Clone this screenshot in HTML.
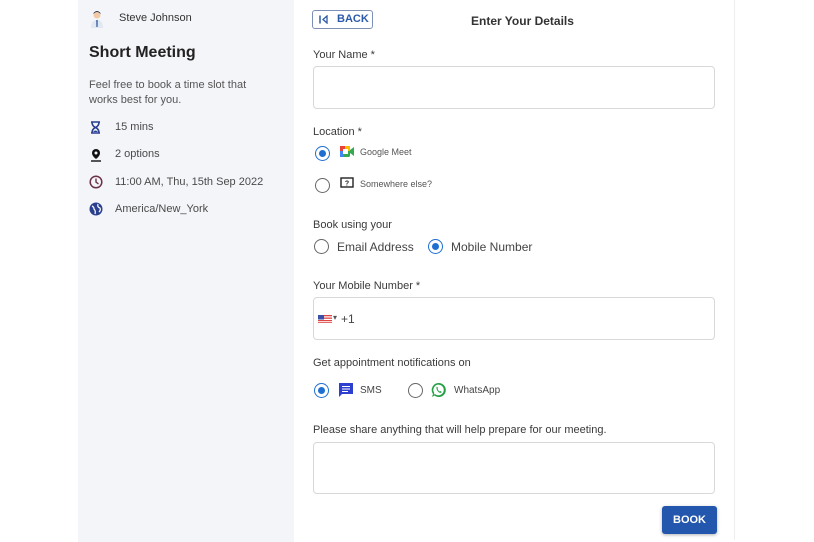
<!DOCTYPE html>
<html><head><style>
*{margin:0;padding:0;box-sizing:border-box}
body{width:814px;height:542px;background:#fff;font-family:"Liberation Sans",Arial,sans-serif;position:relative;overflow:hidden;color:#333}
.a{position:absolute;white-space:nowrap}
.side{position:absolute;left:78px;top:0;width:216px;height:542px;background:#f4f5f9}
.vl{position:absolute;left:734px;top:0;width:1px;height:540px;background:#eee}
.lbl{font-size:11px;color:#3a3a3a}
.box{position:absolute;border:1px solid #d8d8d8;border-radius:4px;background:#fff}
.r{position:absolute;width:15px;height:15px;border:1.6px solid #666;border-radius:50%}
.r.on{border-color:#1e6fd0}
.r.on::after{content:"";position:absolute;left:2.5px;top:2.5px;width:7px;height:7px;border-radius:50%;background:#1e6fd0}
.si{font-size:11px;color:#4a4a4a}
</style></head><body>
<div class="side"></div>
<div class="vl"></div>
<svg class="a" style="left:89px;top:10px" width="16" height="18"><circle cx="8" cy="5" r="3.5" fill="#f2c9a5"/><path d="M4.5 4 Q8 0 11.5 4 L11.5 3 Q8 -1 4.5 3Z" fill="#2a3a5a"/><path d="M2 18 Q2 10 8 10 Q14 10 14 18Z" fill="#dfe8f3"/><path d="M7.3 10 L8.7 10 L8.6 17 L7.4 17Z" fill="#2c5a9a"/></svg>
<div class="a" style="left:119px;top:12px;font-size:11px;color:#333">Steve Johnson</div>
<div class="a" style="left:89px;top:44px;font-size:16px;font-weight:bold;color:#222">Short Meeting</div>
<div class="a" style="left:89px;top:78px;font-size:11px;color:#555;line-height:15px">Feel free to book a time slot that<br>works best for you.</div>
<svg class="a" style="left:90px;top:121px" width="12" height="13"><path d="M1 1H10M1 12H10M2 1 Q2 5 5.5 6.5 Q2 8 2 12 M9 1 Q9 5 5.5 6.5 Q9 8 9 12" stroke="#2a3f8f" stroke-width="1.6" fill="none"/><path d="M3 11 Q5.5 8 8 11Z" fill="#2a3f8f"/></svg>
<div class="a si" style="left:115px;top:121px">15 mins</div>
<svg class="a" style="left:90px;top:148px" width="12" height="14"><path d="M6 1 A4 4 0 0 1 10 5 Q10 8 6 11 Q2 8 2 5 A4 4 0 0 1 6 1Z" fill="#111"/><circle cx="6" cy="5" r="1.5" fill="#f4f5f9"/><path d="M1 13H11" stroke="#111" stroke-width="1.4"/></svg>
<div class="a si" style="left:115px;top:148px">2 options</div>
<svg class="a" style="left:89px;top:175px" width="14" height="14"><circle cx="7" cy="7" r="5.8" stroke="#6b3146" stroke-width="1.5" fill="none"/><path d="M7 3.5V7L9.5 9" stroke="#6b3146" stroke-width="1.4" fill="none"/></svg>
<div class="a si" style="left:115px;top:176px">11:00 AM, Thu, 15th Sep 2022</div>
<svg class="a" style="left:89px;top:202px" width="14" height="14"><circle cx="7" cy="7" r="6.5" fill="#2a3f8f"/><path d="M3 4 Q5 5 5 7 Q7 9 6 12 M9 2 Q8 5 11 6 Q12 8 10 10" stroke="#f4f5f9" stroke-width="1.3" fill="none"/></svg>
<div class="a si" style="left:115px;top:203px">America/New_York</div>

<div class="a" style="left:312px;top:10px;width:61px;height:19px;border:1px solid #7c8fb5;border-radius:3px;"></div>
<svg class="a" style="left:319px;top:15px" width="10" height="9"><path d="M1 0.5V8.5" stroke="#2d5aa8" stroke-width="1.5"/><path d="M8 1 L4 4.5 L8 8Z" stroke="#2d5aa8" stroke-width="1.3" fill="none"/></svg>
<div class="a" style="left:337px;top:13px;font-size:11px;font-weight:bold;color:#2d5aa8">BACK</div>
<div class="a" style="left:471px;top:14px;font-size:12px;font-weight:bold;color:#333">Enter Your Details</div>

<div class="a lbl" style="left:313px;top:49px">Your Name *</div>
<div class="box" style="left:313px;top:66px;width:402px;height:43px"></div>

<div class="a lbl" style="left:313px;top:126px">Location *</div>
<div class="r on" style="left:315px;top:146px"></div>
<svg class="a" style="left:340px;top:146px" width="14" height="11"><rect x="0" y="0" width="10" height="11" rx="1.5" fill="#34a853"/><rect x="0" y="0" width="5" height="5" fill="#ea4335"/><rect x="5" y="0" width="5" height="5" fill="#fbbc04"/><rect x="0" y="5" width="3" height="6" fill="#4285f4"/><path d="M10 4L14 1V10L10 7Z" fill="#34a853"/><rect x="3" y="3" width="5" height="5" fill="#fff"/></svg>
<div class="a" style="left:360px;top:147px;font-size:9px;color:#555">Google Meet</div>
<div class="r" style="left:315px;top:178px"></div>
<svg class="a" style="left:340px;top:177px" width="14" height="12"><rect x="1" y="1" width="12" height="9" stroke="#222" stroke-width="1.4" fill="none"/><text x="7" y="8.5" font-size="7" font-weight="bold" text-anchor="middle" font-family="Liberation Sans" fill="#222">?</text></svg>
<div class="a" style="left:360px;top:179px;font-size:9px;color:#555">Somewhere else?</div>

<div class="a lbl" style="left:313px;top:219px">Book using your</div>
<div class="r" style="left:314px;top:239px"></div>
<div class="a" style="left:337px;top:240px;font-size:12px;color:#444">Email Address</div>
<div class="r on" style="left:428px;top:239px"></div>
<div class="a" style="left:451px;top:240px;font-size:12px;color:#444">Mobile Number</div>

<div class="a lbl" style="left:313px;top:280px">Your Mobile Number *</div>
<div class="box" style="left:313px;top:297px;width:402px;height:43px"></div>
<svg class="a" style="left:318px;top:315px" width="14" height="8"><rect width="14" height="8" fill="#d44"/><rect y="1.3" width="14" height="1.2" fill="#fff"/><rect y="3.8" width="14" height="1.2" fill="#fff"/><rect y="6.2" width="14" height="1" fill="#fff"/><rect width="6" height="4.5" fill="#3a4fa8"/></svg>
<div class="a" style="left:333px;top:313px;font-size:8px;color:#555">▾</div>
<div class="a" style="left:341px;top:312px;font-size:12px;color:#444">+1</div>

<div class="a lbl" style="left:313px;top:357px">Get appointment notifications on</div>
<div class="r on" style="left:314px;top:383px"></div>
<svg class="a" style="left:338px;top:382px" width="16" height="16"><path d="M1 1H15V12H4L1 15Z" fill="#2d3fd0"/><path d="M4 4.5H12M4 7H12M4 9.5H10" stroke="#fff" stroke-width="1.1"/></svg>
<div class="a" style="left:360px;top:385px;font-size:10px;color:#444">SMS</div>
<div class="r" style="left:408px;top:383px"></div>
<svg class="a" style="left:431px;top:382px" width="16" height="16"><path d="M8 1 A7 7 0 1 1 3.5 13.5 L1 15 L2 12 A7 7 0 0 1 8 1Z" fill="#25a045"/><path d="M8 2.7 A5.3 5.3 0 1 1 4 12 L2.7 12.8 L3.3 11 A5.3 5.3 0 0 1 8 2.7Z" fill="#fff"/><path d="M5.5 5 Q5 8 8 10.5 Q10 11.5 10.8 10 L9.5 9 L8.8 9.6 Q7 8.5 6.5 6.8 L7 6 L6.2 4.7Z" fill="#25a045"/></svg>
<div class="a" style="left:454px;top:385px;font-size:10px;color:#444">WhatsApp</div>

<div class="a lbl" style="left:313px;top:424px">Please share anything that will help prepare for our meeting.</div>
<div class="box" style="left:313px;top:442px;width:402px;height:52px"></div>
<div class="a" style="left:662px;top:506px;width:55px;height:28px;background:#2357ad;border-radius:3px;box-shadow:0 1px 3px rgba(0,0,0,.3);color:#fff;font-size:11px;font-weight:bold;text-align:center;line-height:28px">BOOK</div>
</body></html>
